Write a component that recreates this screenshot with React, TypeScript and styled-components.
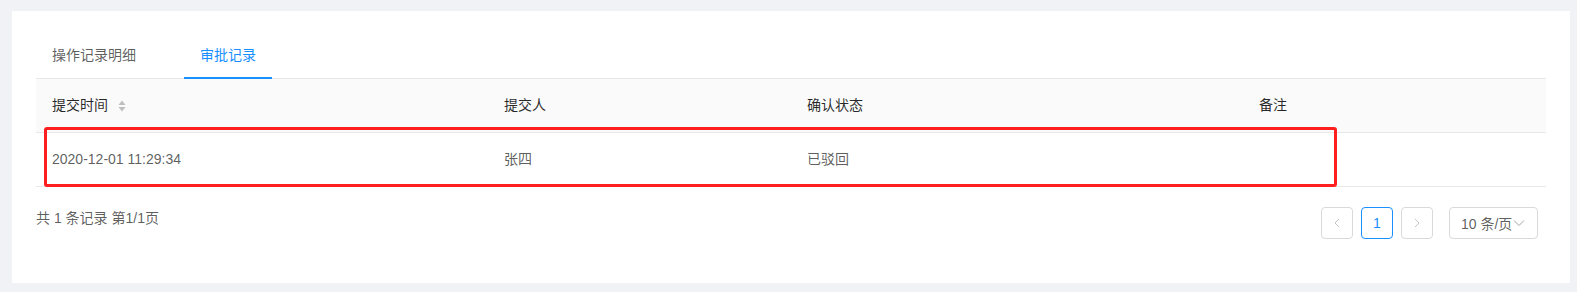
import styled, { createGlobalStyle } from 'styled-components'

const GlobalStyle = createGlobalStyle`
  html, body {
    margin: 0;
    padding: 0;
    background: #f0f2f5;
    font-family: 'Liberation Sans', 'Noto Sans CJK SC', sans-serif;
    font-size: 14px;
    color: rgba(0, 0, 0, 0.65);
  }
`

const Page = styled.div`
  padding: 11px 7px 9px 12px;
`

const Card = styled.div`
  position: relative;
  background: #fff;
  height: 272px;
  box-sizing: border-box;
  padding: 21px 24px 0;
`

const TabBar = styled.div`
  display: flex;
  gap: 32px;
  border-bottom: 1px solid #e8e8e8;
`

const Tab = styled.div<{ $active?: boolean }>`
  padding: 12px 16px 11px;
  line-height: 22px;
  color: ${({ $active }) => ($active ? '#1890ff' : 'rgba(0, 0, 0, 0.65)')};
  border-bottom: 2px solid ${({ $active }) => ($active ? '#1890ff' : 'transparent')};
  margin-bottom: -1px;
`

const Table = styled.table`
  width: 100%;
  border-collapse: collapse;
  table-layout: fixed;
`

const HeadCell = styled.th`
  background: #fafafa;
  color: rgba(0, 0, 0, 0.85);
  font-weight: 400;
  text-align: left;
  padding: 16px;
  line-height: 21px;
  border-bottom: 1px solid #e8e8e8;
`

const Cell = styled.td`
  padding: 16px;
  line-height: 21px;
  border-bottom: 1px solid #e8e8e8;
`

const HeadLabel = styled.span`
  display: inline-flex;
  align-items: center;
  gap: 10px;
`

const Footer = styled.div`
  display: flex;
  align-items: flex-start;
  justify-content: space-between;
  margin-top: 20px;
  padding-right: 8px;
`

const Total = styled.div`
  line-height: 22px;
`

const Pager = styled.div`
  display: flex;
  align-items: center;
`

const PageButton = styled.div<{ $active?: boolean }>`
  width: 32px;
  height: 32px;
  box-sizing: border-box;
  margin-right: 8px;
  border: 1px solid ${({ $active }) => ($active ? '#1890ff' : '#d9d9d9')};
  border-radius: 4px;
  display: flex;
  align-items: center;
  justify-content: center;
  color: ${({ $active }) => ($active ? '#1890ff' : 'rgba(0, 0, 0, 0.25)')};
  font-family: 'Liberation Sans', sans-serif;
`

const SizeSelect = styled.div`
  margin-left: 8px;
  width: 89px;
  height: 32px;
  box-sizing: border-box;
  border: 1px solid #d9d9d9;
  border-radius: 4px;
  display: flex;
  align-items: center;
  padding: 0 8px 0 11px;
  gap: 1px;
  color: rgba(0, 0, 0, 0.65);
`

const Highlight = styled.div`
  position: absolute;
  left: 32px;
  top: 116px;
  width: 1293px;
  height: 60px;
  box-sizing: border-box;
  border: 3px solid #ff1f1f;
  border-radius: 3px;
  pointer-events: none;
`

const SortIcon = () => (
  <svg width="8" height="12" viewBox="0 0 8 12">
    <path d="M4 0.5 L7.5 5 L0.5 5 Z" fill="#bfbfbf" />
    <path d="M4 11.5 L7.5 7 L0.5 7 Z" fill="#bfbfbf" />
  </svg>
)

const Chevron = ({ dir }: { dir: 'left' | 'right' | 'down' }) => {
  const d = dir === 'left' ? 'M7 2 L3 6 L7 10' : dir === 'right' ? 'M3 2 L7 6 L3 10' : 'M1 3.5 L6 8.5 L11 3.5'
  const w = dir === 'down' ? 12 : 10
  return (
    <svg width={w} height="12" viewBox={`0 0 ${w} 12`}>
      <path d={d} fill="none" stroke={dir === 'down' ? '#a6a6a6' : '#c4c4c4'} strokeWidth="1" />
    </svg>
  )
}

export default function App() {
  return (
    <Page>
      <GlobalStyle />
      <Card>
        <TabBar>
          <Tab>操作记录明细</Tab>
          <Tab $active>审批记录</Tab>
        </TabBar>
        <Table>
          <colgroup>
            <col style={{ width: 452 }} />
            <col style={{ width: 303 }} />
            <col style={{ width: 452 }} />
            <col />
          </colgroup>
          <thead>
            <tr>
              <HeadCell>
                <HeadLabel>
                  提交时间
                  <SortIcon />
                </HeadLabel>
              </HeadCell>
              <HeadCell>提交人</HeadCell>
              <HeadCell>确认状态</HeadCell>
              <HeadCell>备注</HeadCell>
            </tr>
          </thead>
          <tbody>
            <tr>
              <Cell>2020-12-01 11:29:34</Cell>
              <Cell>张四</Cell>
              <Cell>已驳回</Cell>
              <Cell></Cell>
            </tr>
          </tbody>
        </Table>
        <Footer>
          <Total>共 1 条记录 第1/1页</Total>
          <Pager>
            <PageButton>
              <Chevron dir="left" />
            </PageButton>
            <PageButton $active>1</PageButton>
            <PageButton>
              <Chevron dir="right" />
            </PageButton>
            <SizeSelect>
              10 条/页
              <Chevron dir="down" />
            </SizeSelect>
          </Pager>
        </Footer>
        <Highlight />
      </Card>
    </Page>
  )
}
